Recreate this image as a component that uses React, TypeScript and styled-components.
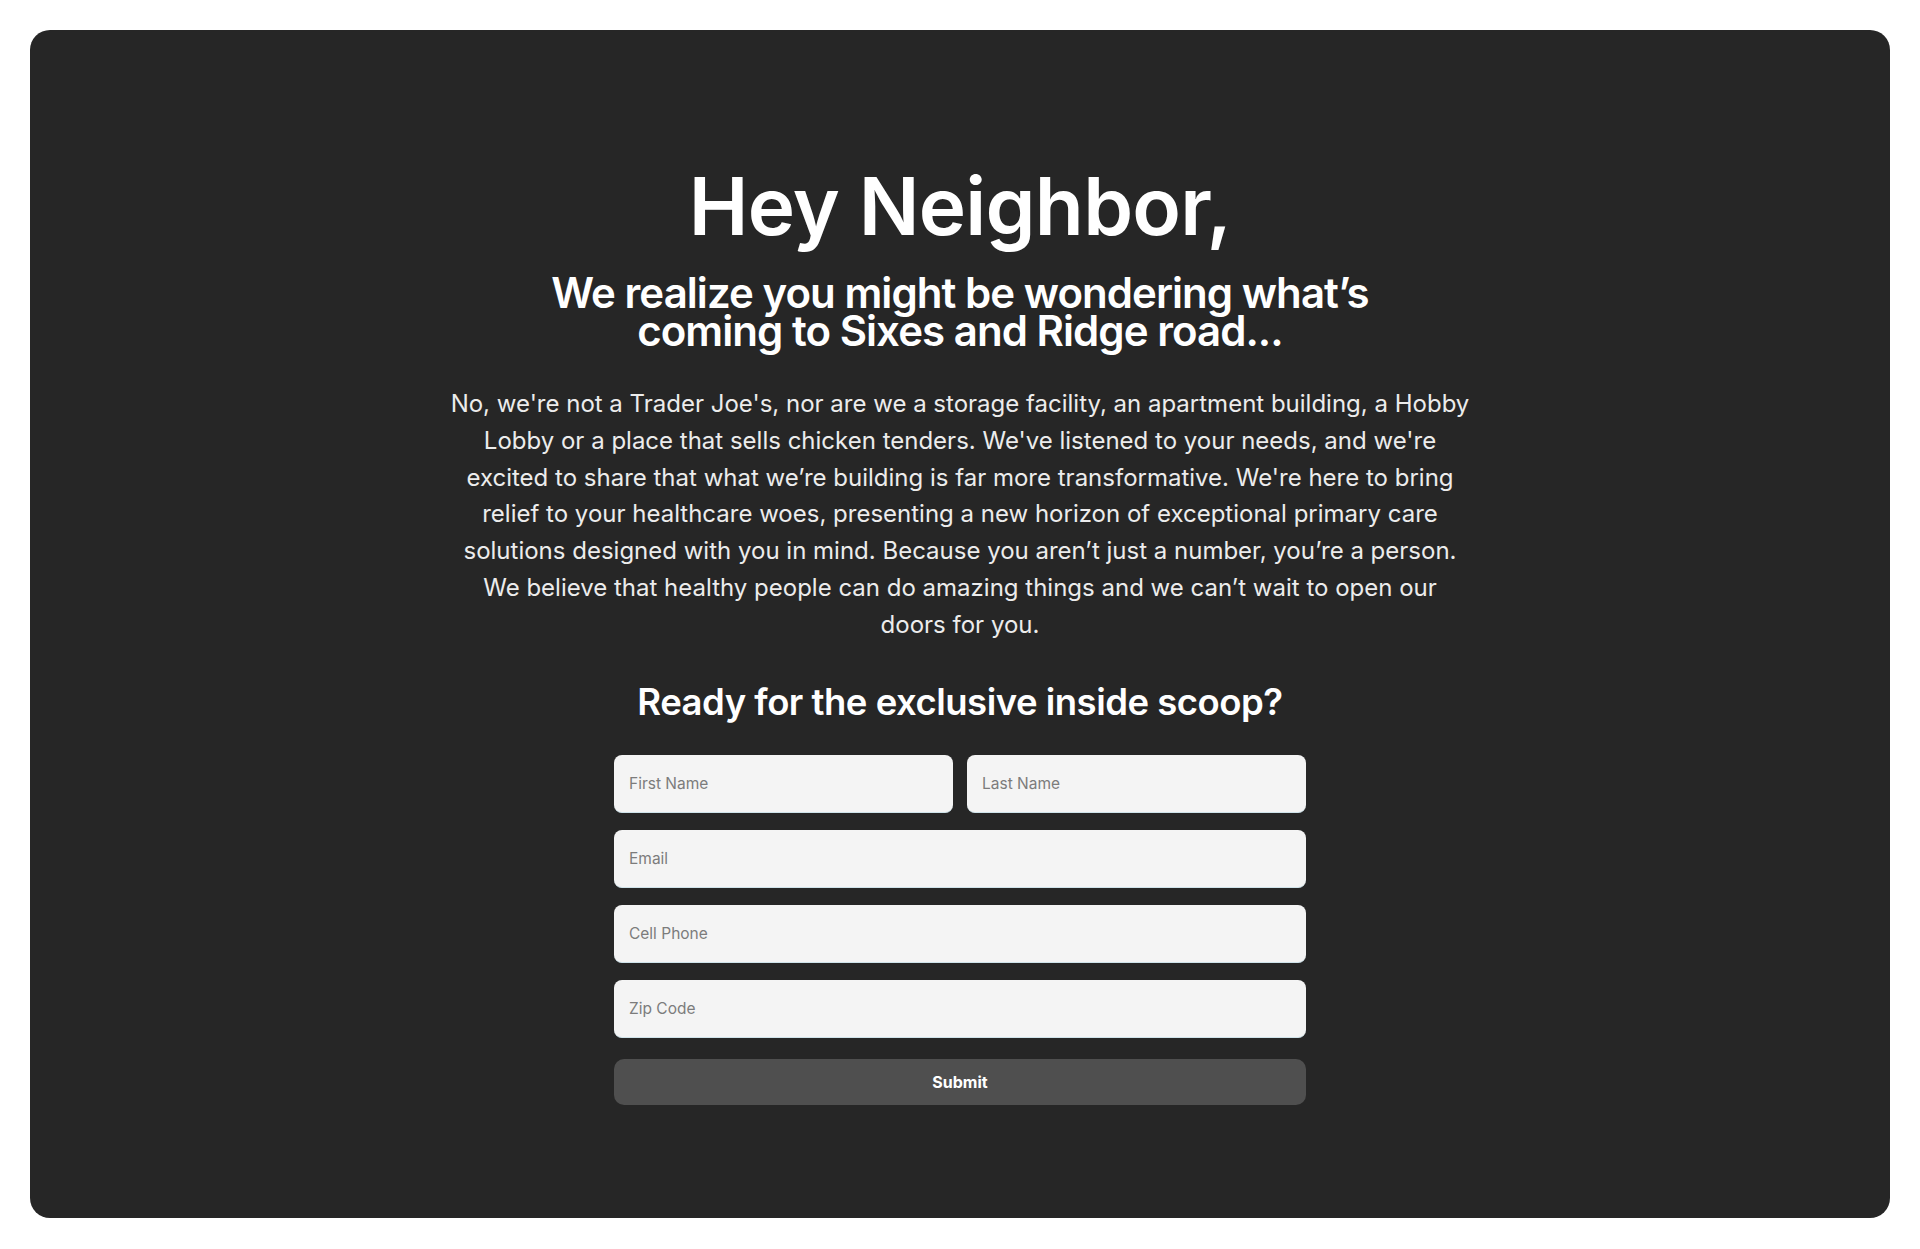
import React, { useState } from 'react';
import styled, { createGlobalStyle } from 'styled-components';

const GlobalStyle = createGlobalStyle`
  * {
    box-sizing: border-box;
  }
  body {
    margin: 0;
    background: #ffffff;
    font-family: Inter, "Noto Sans", sans-serif;
  }
`;

const Page = styled.div`
  padding: 30px 30px 31px;
`;

const Card = styled.section`
  height: 1188px;
  background-color: #262626;
  border-radius: 20px;
  display: flex;
  flex-direction: column;
  align-items: center;
  padding-top: 128px;
  color: #ffffff;
`;

const Title = styled.h1`
  margin: 0;
  font-size: 80px;
  line-height: 96px;
  font-weight: 600;
  letter-spacing: -0.7px;
  text-align: center;
`;

const Subtitle = styled.h2`
  margin: 20px 0 0;
  font-size: 42px;
  line-height: 38px;
  font-weight: 600;
  letter-spacing: -0.95px;
  text-align: center;
`;

const Intro = styled.p`
  margin: 36px 0 0;
  font-size: 24px;
  line-height: 36.8px;
  font-weight: 400;
  color: #ececec;
  text-align: center;
  white-space: nowrap;
`;

const FormTitle = styled.h3`
  margin: 36px 0 0;
  font-size: 36.5px;
  line-height: 44px;
  font-weight: 600;
  letter-spacing: -0.5px;
  text-align: center;
`;

const Form = styled.form`
  margin-top: 31px;
  width: 692px;
  display: grid;
  grid-template-columns: 1fr 1fr;
  column-gap: 14px;
  row-gap: 17px;
`;

const Field = styled.input<{ $full?: boolean }>`
  grid-column: ${(p) => (p.$full ? '1 / -1' : 'auto')};
  height: 58px;
  padding: 0 15px;
  border: none;
  border-bottom: 1px solid #cfe3ea;
  border-radius: 8px;
  background-color: #f4f4f4;
  font-family: Inter, "Noto Sans", sans-serif;
  font-size: 15.5px;
  color: #333333;
  outline: none;

  &::placeholder {
    color: #7c7c7c;
  }
`;

const SubmitButton = styled.button`
  grid-column: 1 / -1;
  margin-top: 4px;
  height: 46px;
  border: none;
  border-radius: 10px;
  background-color: #4f4f4f;
  color: #ffffff;
  font-family: Inter, "Noto Sans", sans-serif;
  font-size: 16px;
  font-weight: 700;
  cursor: pointer;
`;

interface Neighbor {
  firstName: string;
  lastName: string;
  email: string;
  phone: string;
  zip: string;
}

const App: React.FC = () => {
  const [form, setForm] = useState<Neighbor>({ firstName: '', lastName: '', email: '', phone: '', zip: '' });

  const update = (key: keyof Neighbor) => (e: React.ChangeEvent<HTMLInputElement>) =>
    setForm({ ...form, [key]: e.target.value });

  return (
    <>
      <GlobalStyle />
      <Page>
        <Card>
          <Title>Hey Neighbor,</Title>
          <Subtitle>
            We realize you might be wondering what’s
            <br />
            coming to Sixes and Ridge road...
          </Subtitle>
          <Intro>
            No, we're not a Trader Joe's, nor are we a storage facility, an apartment building, a Hobby
            <br />
            Lobby or a place that sells chicken tenders. We've listened to your needs, and we're
            <br />
            excited to share that what we’re building is far more transformative. We're here to bring
            <br />
            relief to your healthcare woes, presenting a new horizon of exceptional primary care
            <br />
            solutions designed with you in mind. Because you aren’t just a number, you’re a person.
            <br />
            We believe that healthy people can do amazing things and we can’t wait to open our
            <br />
            doors for you.
          </Intro>
          <FormTitle>Ready for the exclusive inside scoop?</FormTitle>
          <Form onSubmit={(e) => e.preventDefault()}>
            <Field placeholder="First Name" value={form.firstName} onChange={update('firstName')} />
            <Field placeholder="Last Name" value={form.lastName} onChange={update('lastName')} />
            <Field $full type="email" placeholder="Email" value={form.email} onChange={update('email')} />
            <Field $full type="tel" placeholder="Cell Phone" value={form.phone} onChange={update('phone')} />
            <Field $full placeholder="Zip Code" value={form.zip} onChange={update('zip')} />
            <SubmitButton type="submit">Submit</SubmitButton>
          </Form>
        </Card>
      </Page>
    </>
  );
};

export default App;
